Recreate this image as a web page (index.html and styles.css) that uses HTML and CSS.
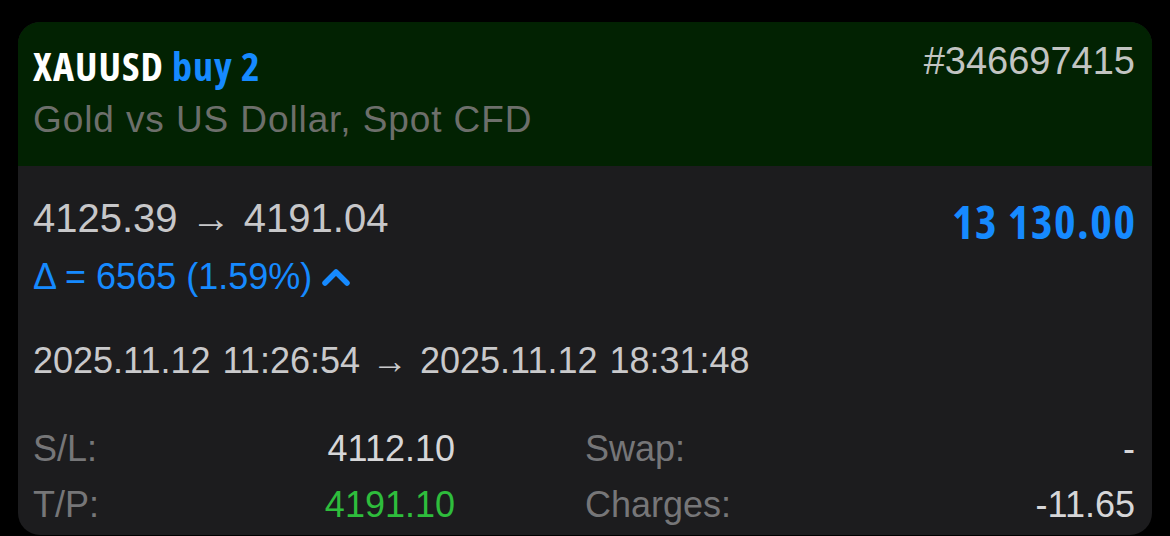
FILE: index.html
```html
<!DOCTYPE html>
<html>
<head>
<meta charset="utf-8">
<link rel="stylesheet" href="styles.css">
</head>
<body>
<div class="card">
  <div class="head">
    <div class="head-row">
      <div class="title"><span class="sym">XAUUSD</span> <span class="side">buy 2</span></div>
      <div class="ticket">#346697415</div>
    </div>
    <div class="desc">Gold vs US Dollar, Spot CFD</div>
  </div>
  <div class="body">
    <div class="price-row">
      <div class="prices">
        <div class="price">4125.39 → 4191.04</div>
        <div class="delta">Δ = 6565 (1.59%) <svg class="chev" width="28" height="18" viewBox="0 0 28 18"><polyline points="3,15 14,4 25,15" fill="none" stroke="#168aff" stroke-width="5.5" stroke-linecap="round" stroke-linejoin="round"/></svg></div>
      </div>
      <div class="profit">13 130.00</div>
    </div>
    <div class="dates">2025.11.12 11:26:54 → 2025.11.12 18:31:48</div>
    <div class="stats">
      <div class="half left">
        <div class="stat"><span class="lbl">S/L:</span><span class="val">4112.10</span></div>
        <div class="stat"><span class="lbl">T/P:</span><span class="val green">4191.10</span></div>
      </div>
      <div class="half right">
        <div class="stat"><span class="lbl">Swap:</span><span class="val">-</span></div>
        <div class="stat"><span class="lbl">Charges:</span><span class="val">-11.65</span></div>
      </div>
    </div>
  </div>
</div>
</body>
</html>
```
FILE: styles.css
```css
html, body {
  margin: 0;
  padding: 0;
  background: #000;
}
body {
  padding: 22px 18px 0 18px;
  font-family: "Liberation Sans", Arial, sans-serif;
  height: 536px;
  box-sizing: border-box;
  overflow: hidden;
}
.card {
  width: 1134px;
  height: 513px;
  border-radius: 22px;
  overflow: hidden;
  background: #1c1c1e;
  display: flex;
  flex-direction: column;
}
.head {
  background: #022202;
  padding: 22px 17px 24px 15px;
}
.head-row {
  display: flex;
  justify-content: space-between;
  align-items: flex-start;
}
.title {
  font-family: "Open Sans", sans-serif;
  font-stretch: 75%;
  font-weight: 700;
  font-size: 40px;
  letter-spacing: 1px;
  line-height: 44px;
  color: #fff;
}
.side {
  color: #168aff;
}
.ticket {
  font-size: 38px;
  line-height: 34px;
  color: #c2c4c2;
}
.desc {
  margin-top: 10px;
  font-size: 37px;
  letter-spacing: 0.9px;
  line-height: 44px;
  color: #6d6f6b;
}
.body {
  padding: 28px 17px 0 15px;
}
.price-row {
  display: flex;
  justify-content: space-between;
  align-items: flex-start;
}
.price {
  font-size: 40px;
  line-height: 48px;
  color: #c7c7c9;
  word-spacing: 2px;
}
.delta {
  margin-top: 13px;
  font-size: 36px;
  line-height: 44px;
  color: #168aff;
  display: flex;
  align-items: center;
  gap: 10px;
}
.chev {
  display: block;
}
.profit {
  margin-top: 3px;
  margin-right: -1.5px;
  font-family: "Open Sans", sans-serif;
  font-stretch: 75%;
  font-weight: 700;
  font-size: 46px;
  letter-spacing: 1.5px;
  line-height: 48px;
  color: #168aff;
}
.dates {
  margin-top: 34px;
  font-size: 36px;
  line-height: 56px;
  color: #c9c9cb;
  word-spacing: 2px;
}
.stats {
  margin-top: 32px;
  display: flex;
}
.half {
  display: flex;
  flex-direction: column;
}
.left {
  width: 422px;
  margin-right: 130px;
}
.right {
  flex: 1;
}
.stat {
  display: flex;
  justify-content: space-between;
  font-size: 36px;
  line-height: 56px;
}
.lbl {
  color: #767678;
}
.val {
  color: #d6d6d8;
}
.green {
  color: #2ebd3c;
}
```
